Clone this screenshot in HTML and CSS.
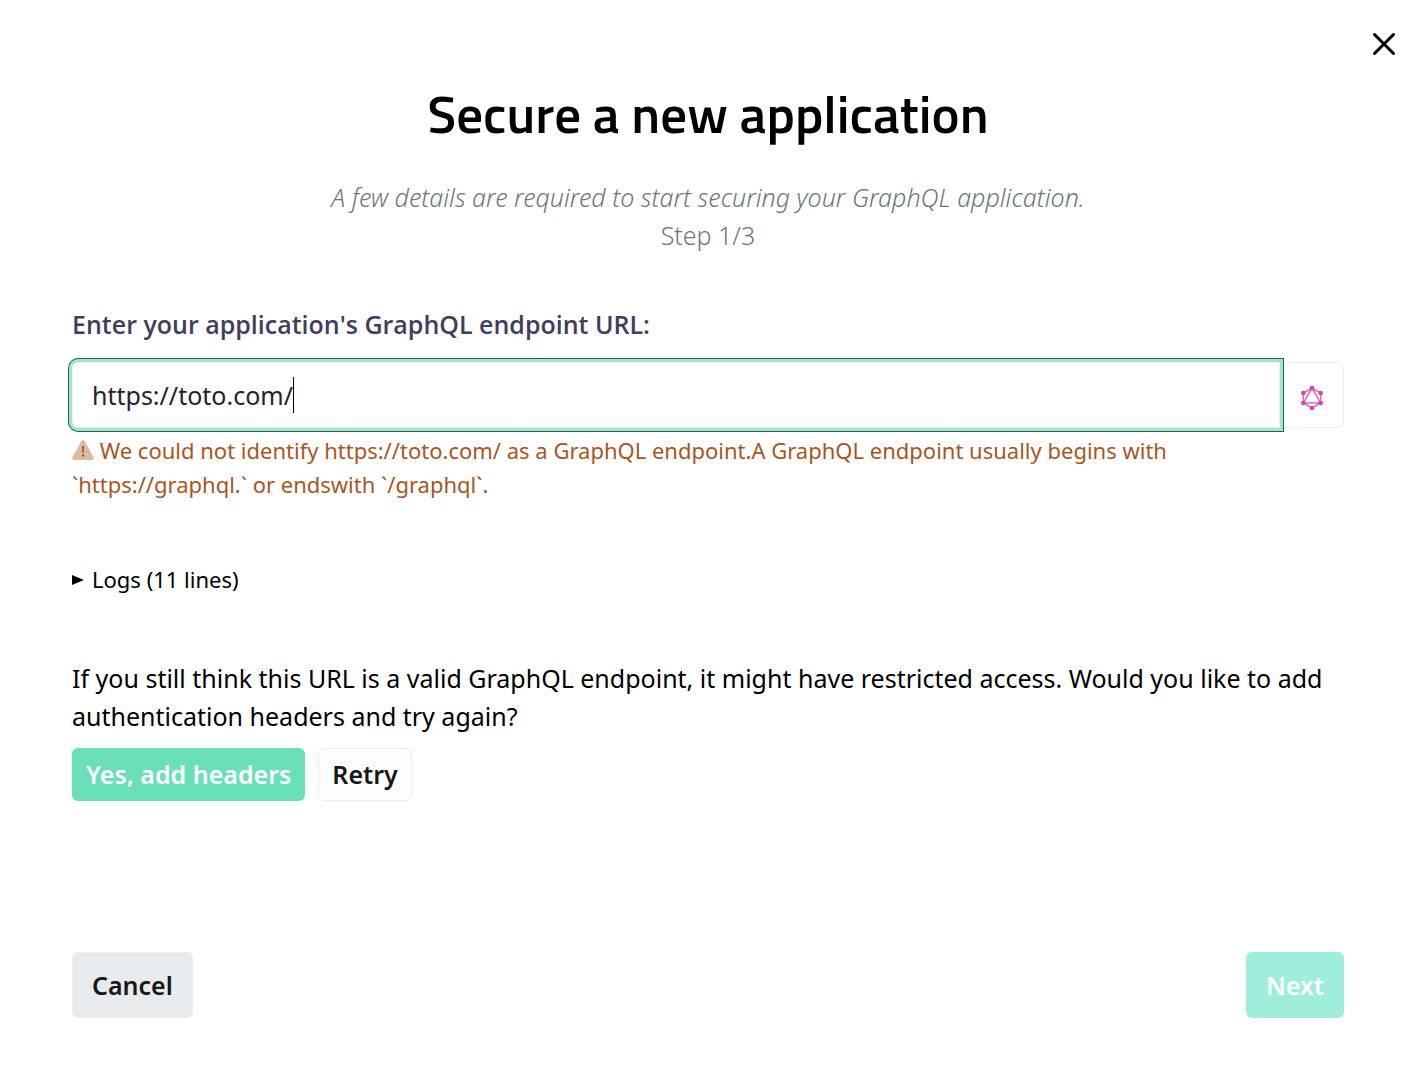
FILE: index.html
```html
<!DOCTYPE html>
<html lang="en">
<head>
<meta charset="utf-8">
<meta name="viewport" content="width=device-width, initial-scale=1">
<title>Secure a new application</title>
<link rel="stylesheet" href="styles.css">
</head>
<body>
<main class="dialog">
  <button class="close" type="button" aria-label="Close">
    <svg width="24" height="24" viewBox="0 0 24 24" fill="none" stroke="#000" stroke-width="3" stroke-linecap="round"><path d="M2.500 2.500l19 19M21.500 2.500l-19 19"/></svg>
  </button>
  <header class="intro">
    <h1 class="title">Secure a new application</h1>
    <p class="lead"><em>A few details are required to start securing your GraphQL application.</em><br>Step 1/3</p>
  </header>
  <form class="form">
    <label class="label" for="endpoint">Enter your application's GraphQL endpoint URL:</label>
    <div class="group">
      <div class="field">
        <input class="input" id="endpoint" type="text" value="https://toto.com/">
        <span class="caret-track" aria-hidden="true"><span class="ghost">https://toto.com/</span></span>
      </div>
      <span class="addon">
        <svg width="24" height="26" viewBox="0 0 24 26" fill="none" stroke="#dc6cba" stroke-width="1.500"><path d="M12 3l8.700 5v10L12 23l-8.700-5V8zM12 3L3.300 18h17.400z"/><g fill="#d843a8" stroke="none"><circle cx="12" cy="3" r="2.300"/><circle cx="20.700" cy="8" r="2.300"/><circle cx="20.700" cy="18" r="2.300"/><circle cx="12" cy="23" r="2.300"/><circle cx="3.300" cy="18" r="2.300"/><circle cx="3.300" cy="8" r="2.300"/></g></svg>
      </span>
    </div>
    <p class="warning"><svg class="warn-icon" width="22" height="20" viewBox="0 0 22 20"><path fill="#dcbba2" d="M9.500 1q1.500-2 3 0l9 16q1 3-2 3h-17q-3 0-2-3z"/><path fill="#a9561e" d="M10 6h2l-.3 7h-1.400z"/><circle cx="11" cy="15.500" r="1.200" fill="#a9561e"/></svg> We could not identify https://toto.com/ as a GraphQL endpoint.A GraphQL endpoint usually begins with `https://graphql.` or endswith `/graphql`.</p>
    <details class="logs"><summary class="summary"><svg width="12" height="12" viewBox="0 0 12 12"><path d="M0 2l12 5-12 5z"/></svg>Logs (11 lines)</summary></details>
    <p class="question">If you still think this URL is a valid GraphQL endpoint, it might have restricted access. Would you like to add authentication headers and try again?</p>
    <div class="choices">
      <button class="small primary" type="button">Yes, add headers</button>
      <button class="small plain" type="button">Retry</button>
    </div>
    <footer class="footer">
      <button class="large cancel" type="button">Cancel</button>
      <button class="large next" type="button" disabled>Next</button>
    </footer>
  </form>
</main>
</body>
</html>
```
FILE: styles.css
```css
* { box-sizing: border-box; }
body { margin: 0; background: #fff; color: #000; font: 25px/38px "Noto Sans", sans-serif; }
button, input { font: inherit; }
p, h1 { margin: 0; }
.dialog { position: relative; padding: 78px 72px 48px; }
.close { position: absolute; top: 32px; right: 20px; display: flex; padding: 0; border: 0; background: none; }
.intro { text-align: center; }
.title { font: 600 53px/72px "Titillium Web", "Open Sans", sans-serif; }
.lead { margin-top: 28px; color: #6c757d; font-weight: 300; }
.label { display: block; margin-top: 51px; color: #423d5c; font-family: "Open Sans", sans-serif; font-weight: 600; }
.group { display: flex; margin-top: 19px; }
.field { position: relative; flex: 1; }
.input { display: block; width: 100%; height: 66px; padding: 0 19px; border: 1px solid #eee; border-radius: 6px 0 0 6px; outline: 0; background: #fff; color: #212529; box-shadow: 0 0 0 3px #a1e7cf, 0 0 0 4px #2c5f4e; }
.caret-track { position: absolute; top: 15px; left: 20px; height: 36px; border-right: 1px solid #000; pointer-events: none; }
.ghost { visibility: hidden; }
.addon { display: flex; width: 64px; padding-top: 5px; align-items: center; justify-content: center; border: 1px solid #eee; border-left: 0; border-radius: 0 6px 6px 0; }
.warning { margin-top: 5px; color: #a9561e; font-size: 22px; line-height: 34px; }
.warn-icon { vertical-align: -1px; }
.logs { margin-top: 59px; font-size: 22px; }
.summary { display: flex; align-items: center; gap: 8px; list-style: none; }
.question { margin-top: 61px; }
.choices { display: flex; gap: 13px; margin-top: 13px; }
.small, .large { border: 1px solid transparent; border-radius: 6px; font-weight: 600; }
.small { height: 53px; padding: 0 13px 2px; }
.large { height: 66px; padding: 0 19px; }
.primary { background: #69e0b8; color: #fff; }
.plain { border-color: #eee; background: #fdfdfd; color: #171717; }
.footer { display: flex; justify-content: space-between; margin-top: 151px; }
.cancel { border-color: #eceef0; background: #e8ebee; color: #171717; }
.next { background: #9eeedb; color: #fff; }
```
